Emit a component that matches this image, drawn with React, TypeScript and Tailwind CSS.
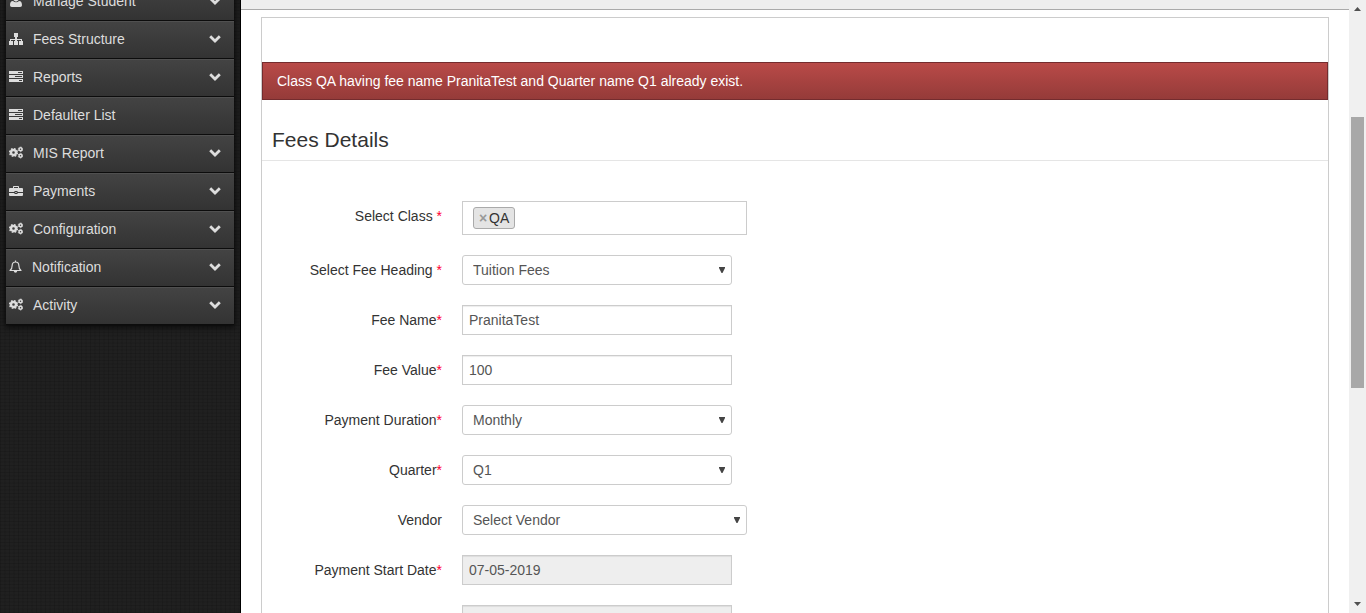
import React, { useState } from 'react';
import type { ReactNode } from 'react';

const iconClass = 'h-[14px] w-[14px] shrink-0';

function UserIcon() {
  return (
    <svg viewBox="0 0 14 14" fill="currentColor" className={iconClass} aria-hidden="true">
      <path d="M7 1a3 3 0 0 1 3 3.200C10 6 8.700 7.500 7 7.500S4 6 4 4.200A3 3 0 0 1 7 1zM4 7q1.200 1.300 3 1.300T10 7c2.300 0 3 2.200 3 4.200q0 1.800-1.800 1.800H2.800Q1 13 1 11.200C1 9.200 1.700 7 4 7z" />
    </svg>
  );
}

function SitemapIcon() {
  return (
    <svg viewBox="0 0 14 14" fill="currentColor" className={iconClass} aria-hidden="true">
      <path d="M5 1h4v4H8v2h5v2h1v4h-4V9h2V8H8v1h1v4H5V9h1V8H2v1h2v4H0V9h1V7h5V5H5z" />
    </svg>
  );
}

function TasksIcon() {
  return (
    <svg viewBox="0 0 14 14" fill="currentColor" className={iconClass} aria-hidden="true">
      <path
        fillRule="evenodd"
        d="M0 1h14v3H0zM9 2v1h4V2zM0 5h14v3H0zM6 6v1h7V6zM0 9h14v3H0zM10 10v1h3v-1z"
      />
    </svg>
  );
}

function CogsIcon() {
  return (
    <svg viewBox="0 0 14 14" fill="none" stroke="currentColor" className={iconClass} aria-hidden="true">
      <circle cx="4.500" cy="6.500" r="2.500" strokeWidth="2.400" />
      <circle cx="4.500" cy="6.500" r="3.900" strokeWidth="1.400" strokeDasharray="1.700 1.360" />
      <circle cx="11.500" cy="3.300" r="1.500" strokeWidth="1.500" />
      <circle cx="11.500" cy="3.300" r="2.300" strokeWidth=".8" strokeDasharray="1.300 1.100" />
      <circle cx="11.500" cy="9.700" r="1.500" strokeWidth="1.500" />
      <circle cx="11.500" cy="9.700" r="2.300" strokeWidth=".8" strokeDasharray="1.300 1.100" />
    </svg>
  );
}

function BriefcaseIcon() {
  return (
    <svg viewBox="0 0 14 14" fill="currentColor" className={iconClass} aria-hidden="true">
      <path
        fillRule="evenodd"
        d="M4 4V2.700q0-.7.7-.7h4.600q.7 0 .7.700V4h3q1 0 1 1v3H8.500V7h-3v1H0V5q0-1 1-1zM5 4h4V3H5zM0 9h5.500v1h3V9H14v2q0 1-1 1H1q-1 0-1-1zM6.300 8h1.400v1H6.300z"
      />
    </svg>
  );
}

function BellIcon() {
  return (
    <svg viewBox="0 0 13 14" fill="none" stroke="currentColor" strokeWidth="1.200" className="h-[14px] w-[13px] shrink-0" aria-hidden="true">
      <path d="M6.500.5v1.500M1 10.500C2.800 9 3.200 7 3.200 5.200c0-2 1.300-3.200 3.300-3.200s3.300 1.200 3.300 3.200C9.800 7 10.200 9 12 10.500z" strokeLinejoin="round" />
      <path d="M4.800 11a1.700 1.700 0 0 0 3.400 0z" fill="currentColor" stroke="none" />
    </svg>
  );
}

function Chevron() {
  return (
    <svg viewBox="0 0 12 8" fill="none" stroke="currentColor" strokeWidth="2.800" className="h-2 w-3 shrink-0" aria-hidden="true">
      <path d="M1.200 1.300 6 6l4.800-4.700" />
    </svg>
  );
}

const menu: { label: string; icon: ReactNode; sub: boolean }[] = [
  { label: 'Manage Student', icon: <UserIcon />, sub: true },
  { label: 'Fees Structure', icon: <SitemapIcon />, sub: true },
  { label: 'Reports', icon: <TasksIcon />, sub: true },
  { label: 'Defaulter List', icon: <TasksIcon />, sub: false },
  { label: 'MIS Report', icon: <CogsIcon />, sub: true },
  { label: 'Payments', icon: <BriefcaseIcon />, sub: true },
  { label: 'Configuration', icon: <CogsIcon />, sub: true },
  { label: 'Notification', icon: <BellIcon />, sub: true },
  { label: 'Activity', icon: <CogsIcon />, sub: true },
];

function Sidebar() {
  return (
    <aside className="w-[241px] shrink-0 overflow-hidden border-r border-black bg-[#202020] bg-[repeating-linear-gradient(0deg,rgba(0,0,0,0.12)_0_1px,transparent_1px_3px,rgba(0,0,0,0.06)_3px_5px,transparent_5px_7px),repeating-linear-gradient(90deg,rgba(0,0,0,0.12)_0_1px,transparent_1px_4px,rgba(0,0,0,0.06)_4px_6px,transparent_6px_9px)] px-1.5">
      <ul className="-mt-[17px] shadow-[0_1px_6px_1px_#080808]">
        {menu.map((item) => (
          <li key={item.label}>
            <a
              href="#"
              className="flex h-[38px] items-center border-t border-b border-t-[#505050] border-b-[#0c0c0c] bg-linear-to-b from-[#434343] to-[#333] pr-[13px] pb-0.5 pl-[3px] text-[#ddd]"
            >
              {item.icon}
              <span className="ml-[10px] flex-1">{item.label}</span>
              {item.sub && <Chevron />}
            </a>
          </li>
        ))}
      </ul>
    </aside>
  );
}

function Row({ id, label, mark, children }: { id: string; label: string; mark?: string; children: ReactNode }) {
  return (
    <div className="mb-5 flex items-start gap-5">
      <label htmlFor={id} className="w-[180px] shrink-0 pt-[5px] text-right text-[#333]">
        {label}
        {mark && <span className="text-[#ff0030]">{mark}</span>}
      </label>
      {children}
    </div>
  );
}

function Select({ id, options, wide }: { id: string; options: string[]; wide?: boolean }) {
  return (
    <div className={wide ? 'relative w-[285px]' : 'relative w-[270px]'}>
      <select
        id={id}
        className="block h-[30px] w-full appearance-none rounded-[3px] border border-[#ccc] bg-white px-[10px] text-[#555]"
      >
        {options.map((o) => (
          <option key={o}>{o}</option>
        ))}
      </select>
      <svg viewBox="0 0 6 6" className="pointer-events-none absolute top-3 right-[7px] h-1.5 w-1.5 fill-[#444]" aria-hidden="true">
        <path d="M0 0h6v1L3.500 6h-1L0 1z" />
      </svg>
    </div>
  );
}

const inputClass =
  'block h-[30px] w-[270px] border border-[#ccc] px-1.5 text-[#555] shadow-[inset_0_1px_1px_rgba(0,0,0,0.075)] disabled:bg-[#eee]';

function FeesForm() {
  const [name, setName] = useState('PranitaTest');
  const [value, setValue] = useState('100');
  return (
    <form className="pt-10">
      <Row id="class" label="Select Class " mark="*">
        <div className="flex h-[34px] w-[285px] items-center border border-[#ccc] px-[10px]">
          <span className="flex h-[22px] items-center rounded-[3px] border border-[#aaa] bg-[#e4e4e4] px-[5px] text-[#333]">
            <button type="button" aria-label="Remove QA" className="mr-0.5 w-2 text-center font-bold text-[#999]">
              ×
            </button>
            QA
          </span>
          <input id="class" className="ml-1 w-10 min-w-0 flex-1 outline-none" />
        </div>
      </Row>
      <Row id="heading" label="Select Fee Heading " mark="*">
        <Select id="heading" options={['Tuition Fees']} />
      </Row>
      <Row id="name" label="Fee Name" mark="*">
        <input id="name" className={inputClass} value={name} onChange={(e) => setName(e.target.value)} />
      </Row>
      <Row id="value" label="Fee Value" mark="*">
        <input id="value" className={inputClass} value={value} onChange={(e) => setValue(e.target.value)} />
      </Row>
      <Row id="duration" label="Payment Duration" mark="*">
        <Select id="duration" options={['Monthly']} />
      </Row>
      <Row id="quarter" label="Quarter" mark="*">
        <Select id="quarter" options={['Q1']} />
      </Row>
      <Row id="vendor" label="Vendor">
        <Select id="vendor" options={['Select Vendor']} wide />
      </Row>
      <Row id="start" label="Payment Start Date" mark="*">
        <input id="start" className={inputClass} defaultValue="07-05-2019" disabled />
      </Row>
      <Row id="end" label="">
        <input id="end" className={inputClass} disabled />
      </Row>
    </form>
  );
}

function ScrollRail() {
  return (
    <div className="flex w-[17px] shrink-0 flex-col items-center bg-[#f0f0f0]" aria-hidden="true">
      <svg viewBox="0 0 7 4" className="mt-[7px] h-1 w-[7px] shrink-0 fill-[#505050]">
        <path d="M0 4h7L3.500 0z" />
      </svg>
      <div className="mt-[106px] h-[271px] w-[13px] shrink-0 bg-[#a8a8a8]" />
      <svg viewBox="0 0 7 4" className="mt-auto mb-[7px] h-1 w-[7px] shrink-0 fill-[#505050]">
        <path d="M0 0h7L3.500 4z" />
      </svg>
    </div>
  );
}

export default function App() {
  return (
    <div className="flex h-screen overflow-hidden bg-white font-['Liberation_Sans',Arial,sans-serif] text-[14px] leading-5">
      <Sidebar />
      <main className="min-w-0 flex-1 overflow-hidden">
        <div className="h-[10px] border-b border-[#aaa] bg-[#eee]" />
        <section className="mx-5 mt-[7px] border border-[#ccc] pt-11">
          <div
            role="alert"
            className="border border-[#742c2e] bg-linear-to-b from-[#b94a48] to-[#953b39] px-[14px] py-2 text-white"
          >
            Class QA having fee name PranitaTest and Quarter name Q1 already exist.
          </div>
          <h1 className="border-b border-[#e5e5e5] px-[10px] pt-5 text-[21px] leading-10 text-[#333]">Fees Details</h1>
          <FeesForm />
        </section>
      </main>
      <ScrollRail />
    </div>
  );
}
